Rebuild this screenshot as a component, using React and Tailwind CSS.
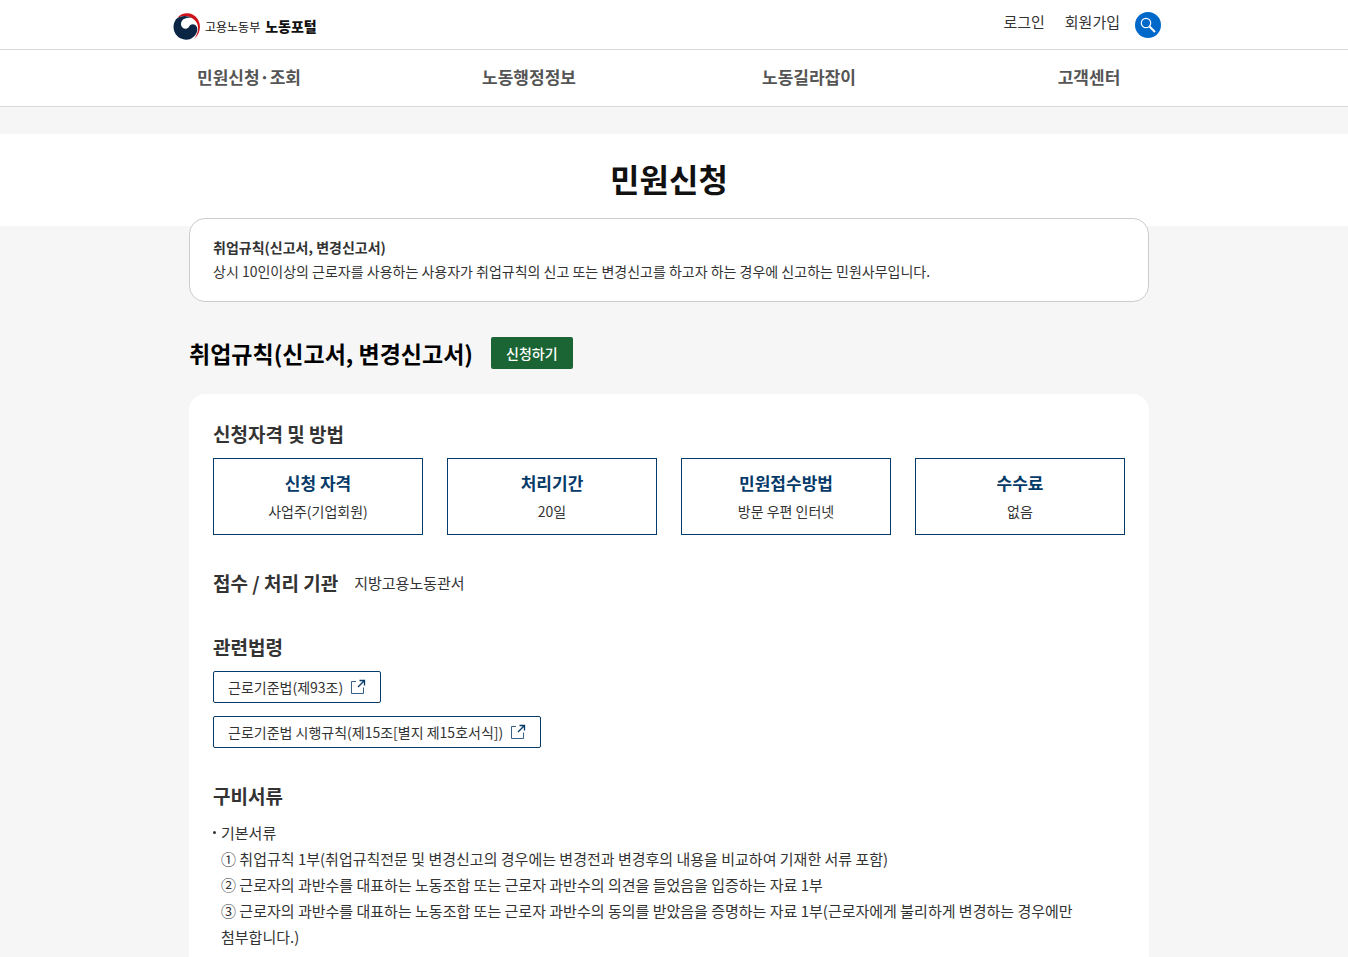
import clsx from 'clsx';

const menus = ['민원신청·조회', '노동행정정보', '노동길라잡이', '고객센터'];

const summary = [
  { title: '신청 자격', value: '사업주(기업회원)' },
  { title: '처리기간', value: '20일' },
  { title: '민원접수방법', value: '방문 우편 인터넷' },
  { title: '수수료', value: '없음' },
];

const laws = ['근로기준법(제93조)', '근로기준법 시행규칙(제15조[별지 제15호서식])'];

const documents = [
  '① 취업규칙 1부(취업규칙전문 및 변경신고의 경우에는 변경전과 변경후의 내용을 비교하여 기재한 서류 포함)',
  '② 근로자의 과반수를 대표하는 노동조합 또는 근로자 과반수의 의견을 들었음을 입증하는 자료 1부',
  '③ 근로자의 과반수를 대표하는 노동조합 또는 근로자 과반수의 동의를 받았음을 증명하는 자료 1부(근로자에게 불리하게 변경하는 경우에만 첨부합니다.)',
];

const Emblem = () => (
  <svg className="size-[27px]" viewBox="0 0 81 81" aria-hidden="true">
    <path
      d="M13 14 C29 -4 60 -4 74 18 C86 38 82 62 63 78 C77 60 80 38 67 23 C53 8 32 5 13 14Z"
      fill="#d0121b"
    />
    <path
      d="M9 19 C22 7 42 6 56 15 C40 12 24 18 24 34 C25 48 41 52 48 41 C54 31 67 31 72 43 C77 60 60 80 40 80 C10 81 -10 47 9 19Z"
      fill="#0b2545"
    />
  </svg>
);

const SearchIcon = () => (
  <svg className="size-4" viewBox="0 0 16 16" fill="none" stroke="#fff" aria-hidden="true">
    <circle cx="6" cy="6" r="4.7" strokeWidth="1.2" />
    <path d="M9.5 9.5 L15 15" strokeWidth="2" />
  </svg>
);

const LinkIcon = () => (
  <svg className="size-4" viewBox="0 0 16 16" fill="none" stroke="#063a69" aria-hidden="true">
    <path d="M6 2.5 H1.5 V14.5 H13.5 V8.5" strokeOpacity="0.8" />
    <path d="M9.5 1.5 H14.5 V6.5 M14.5 1.5 L8 8" strokeWidth="1.3" />
  </svg>
);

const Heading = ({ children, className }) => (
  <h3 className={clsx('text-[19px] leading-8 font-bold', className)}>{children}</h3>
);

const Header = () => (
  <header className="bg-white">
    <div className="border-b border-[#d8d8d8] pr-[10px]">
      <div className="mx-auto flex h-[49px] max-w-[992px] items-center justify-between pr-1">
        <a href="#" className="flex items-center gap-[5px] pt-1 text-[#111]">
          <Emblem />
          <span className="text-[12px]">고용노동부</span>
          <strong className="text-[14px] font-black">노동포털</strong>
        </a>
        <div className="flex items-start text-[15px] leading-5">
          <a href="#" className="mr-5">로그인</a>
          <a href="#" className="mr-[15px]">회원가입</a>
          <button
            type="button"
            aria-label="검색"
            className="flex size-[26px] items-center justify-center rounded-full bg-[#0068c9]"
          >
            <SearchIcon />
          </button>
        </div>
      </div>
    </div>
    <nav className="border-b border-[#d8d8d8] pr-[10px]">
      <ul className="mx-auto grid h-14 max-w-[1120px] grid-cols-4 text-center text-[17px] leading-[54px] font-bold text-[#555]">
        {menus.map((menu) => (
          <li key={menu}>
            <a href="#">{menu}</a>
          </li>
        ))}
      </ul>
    </nav>
  </header>
);

const App = () => {
  return (
    <div className="min-h-screen bg-[#f6f6f6] font-['Noto_Sans_CJK_KR',sans-serif] text-[#333]">
      <Header />
      <div className="mt-[27px] h-[92px] bg-white pr-[10px] text-center">
        <h1 className="text-[32px] leading-[88px] font-bold text-[#111]">민원신청</h1>
      </div>
      <main className="pr-[10px]">
        <div className="mx-auto max-w-[960px]">
          <section className="-mt-2 rounded-[16px] border border-[#ccc] bg-white px-[23px] pt-4 pb-[18px] text-[14px] leading-6">
            <strong className="block font-bold">취업규칙(신고서, 변경신고서)</strong>
            <p>
              상시 10인이상의 근로자를 사용하는 사용자가 취업규칙의 신고 또는 변경신고를 하고자 하는
              경우에 신고하는 민원사무입니다.
            </p>
          </section>

          <div className="mt-[35px] flex items-center gap-[18px]">
            <h2 className="text-[23px] leading-8 font-bold text-black">취업규칙(신고서, 변경신고서)</h2>
            <button
              type="button"
              className="h-8 rounded-[2px] bg-[#1b6535] px-[15px] text-[14px] font-medium text-white"
            >
              신청하기
            </button>
          </div>

          <section className="mt-[25px] rounded-[16px] bg-white p-6 pb-10">
            <Heading>신청자격 및 방법</Heading>
            <ul className="mt-2 grid grid-cols-4 gap-6 text-center">
              {summary.map((item) => (
                <li key={item.title} className="border border-[#063a69] pt-[10px] pb-[9px]">
                  <strong className="block text-[17px] leading-7 font-bold text-[#063a69]">
                    {item.title}
                  </strong>
                  <span className="block text-[14px] leading-7">{item.value}</span>
                </li>
              ))}
            </ul>

            <div className="mt-8 flex items-center gap-4">
              <Heading>접수 / 처리 기관</Heading>
              <p className="text-[15px]">지방고용노동관서</p>
            </div>

            <Heading className="mt-8">관련법령</Heading>
            <ul className="mt-2 flex flex-col items-start gap-[13px]">
              {laws.map((law) => (
                <li key={law}>
                  <a
                    href="#"
                    className="flex h-8 items-center gap-[7px] rounded-[2px] border border-[#063a69] px-[14px] text-[14px]"
                  >
                    {law}
                    <LinkIcon />
                  </a>
                </li>
              ))}
            </ul>

            <Heading className="mt-8">구비서류</Heading>
            <div className="relative mt-2 pl-2 text-[15px] leading-[26px] break-keep">
              <span className="absolute top-[11px] left-0 size-[3px] rounded-full bg-[#333]" />
              <p>기본서류</p>
              {documents.map((doc) => (
                <p key={doc}>{doc}</p>
              ))}
            </div>
          </section>
        </div>
      </main>
    </div>
  );
};

export default App;
